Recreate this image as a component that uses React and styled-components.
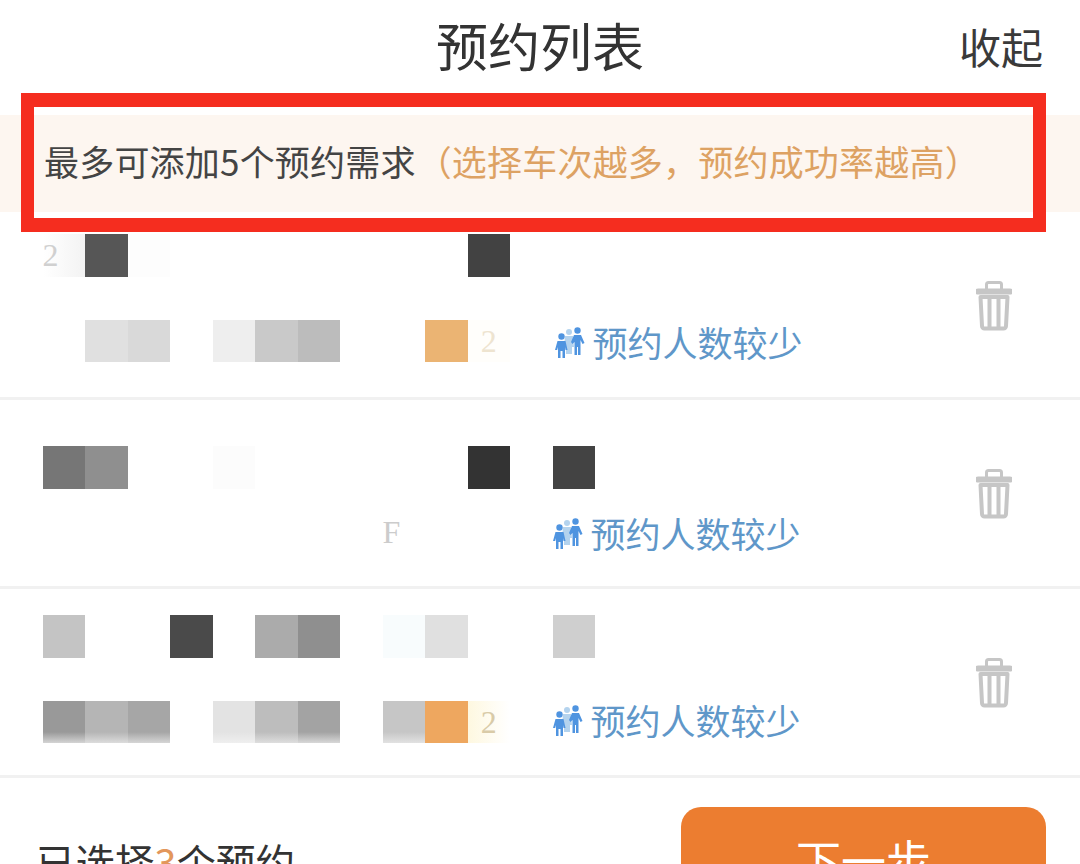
import React from "react";
import styled, { createGlobalStyle } from "styled-components";

const CELL = 42.5;

const GlobalStyle = createGlobalStyle`
  html, body {
    margin: 0;
    padding: 0;
    background: #ffffff;
  }
`;

const Page = styled.div`
  position: relative;
  width: 1080px;
  height: 864px;
  overflow: hidden;
  background: #fff;
  font-family: "Noto Sans CJK SC", "Liberation Sans", sans-serif;
  color: #333;
`;

const Header = styled.header`
  height: 115px;
  box-sizing: border-box;
  display: grid;
  grid-template-columns: 1fr auto 1fr;
  align-items: start;
  padding: 0 37px;
`;

const Title = styled.h1`
  grid-column: 2;
  margin: 0;
  padding-top: 7px;
  font-size: 52px;
  line-height: 76px;
  font-weight: 400;
  color: #333;
`;

const Collapse = styled.button`
  grid-column: 3;
  justify-self: end;
  margin-top: 15px;
  padding: 0;
  border: 0;
  background: none;
  font: inherit;
  font-size: 42px;
  line-height: 62px;
  color: #3a3a3a;
`;

const Banner = styled.div`
  height: 97px;
  box-sizing: border-box;
  padding: 0 0 6px 44px;
  display: flex;
  align-items: center;
  background: #fdf6f0;
  font-size: 35px;
  letter-spacing: 0.2px;
  white-space: nowrap;
  color: #444;
`;

const Hint = styled.span`
  margin-left: 1px;
  color: #dda263;
`;

const Highlight = styled.div`
  position: absolute;
  left: 21px;
  top: 93px;
  width: 1025px;
  height: 139px;
  box-sizing: border-box;
  border: solid #f52d1f;
  border-width: 14px 13px;
`;

const Row = styled.section`
  height: ${(p) => p.$height}px;
  box-sizing: border-box;
  padding: 0 68px 0 42.5px;
  display: flex;
  justify-content: space-between;
  align-items: center;
  border-bottom: 3px solid #f1f1f1;
`;

const Lines = styled.div`
  align-self: flex-start;
  display: flex;
  flex-direction: column;
  gap: ${(p) => p.$gap}px;
  padding-top: ${(p) => p.$top}px;
`;

const Line = styled.div`
  display: grid;
  grid-template-columns: repeat(13, ${CELL}px);
  grid-auto-rows: 42.5px;
  width: ${CELL * 13}px;
`;

const Cell = styled.div`
  grid-column: ${(p) => p.$col + 1};
  grid-row: 1;
  background: ${(p) => p.$shade};
  color: ${(p) => p.$ink || "transparent"};
  font-family: "Liberation Serif", serif;
  font-size: 32px;
  line-height: 42px;
  text-align: ${(p) => p.$align || "center"};
`;

const Demand = styled.div`
  grid-column: 13;
  grid-row: 1;
  display: flex;
  align-items: center;
  gap: 8px;
  width: 260px;
  height: 42.5px;
  transform: translate(${(p) => p.$x}px, ${(p) => p.$y}px);
  font-size: 35px;
  white-space: nowrap;
  color: #5f97c9;
`;

const TrashButton = styled.button`
  width: 36px;
  height: 50px;
  margin-top: 2px;
  padding: 0;
  border: 0;
  background: none;
`;

const Footer = styled.footer`
  display: flex;
  justify-content: space-between;
  align-items: center;
  padding: 29px 34px 0 36px;
`;

const Summary = styled.div`
  padding-bottom: 2px;
  font-size: 39.5px;
  line-height: 58px;
  color: #333;
`;

const Count = styled.span`
  color: #e3975b;
`;

const NextButton = styled.button`
  width: 365px;
  height: 110px;
  padding: 0 0 6px;
  border: 0;
  border-radius: 20px;
  background: #ec7d30;
  font: inherit;
  font-size: 45px;
  color: #fff;
`;

function PeopleIcon() {
  return (
    <svg width="30" height="32" viewBox="0 0 30 32" aria-hidden="true">
      <g fill="#b4d3ee">
        <circle cx="14" cy="6" r="3" />
        <path d="M10 10h8l1 11h-2v7h-6v-7h-2z" />
      </g>
      <g fill="#4f94e0">
        <circle cx="6.5" cy="10.5" r="3.2" />
        <path d="M2.5 15h8l2 9h-2l-.5-3v11H7.500v-7h-2v7H3V21l-.8 3H0z" />
        <circle cx="22.5" cy="4.500" r="3.2" />
        <path d="M19 9h7l3.500 8-2 1-2-4v15h-2.500v-8H22v8h-2.500V16l-2 2-1.500-2z" />
      </g>
    </svg>
  );
}

function TrashIcon() {
  return (
    <svg width="36" height="50" viewBox="0 0 36 50" aria-hidden="true">
      <g fill="none" stroke="#c6c6c6" strokeLinejoin="round">
        <path d="M10.500 9V3.500a2 2 0 0 1 2-2h11a2 2 0 0 1 2 2V9" strokeWidth="3" />
        <path d="M2 10.500h32" strokeWidth="6" strokeLinecap="round" />
        <path d="M4.500 16l1.500 29a2.500 2.500 0 0 0 2.500 2.500h19a2.500 2.500 0 0 0 2.500-2.500l1.500-29z" strokeWidth="4" />
        <path d="M13.500 16v31M22.500 16v31" strokeWidth="4" />
      </g>
    </svg>
  );
}

const fade = (color, to) => `linear-gradient(${color} 74%, ${to})`;

const reservations = [
  {
    id: 1,
    height: 188,
    top: 22,
    gap: 43,
    demand: { x: 2, y: 1 },
    first: [
      { col: 0, shade: "linear-gradient(90deg, #fff, #f3f3f3)", ink: "#d0d0d0", text: "2", align: "left" },
      { col: 1, shade: "#565656" },
      { col: 2, shade: "#fdfdfd" },
      { col: 10, shade: "#424242" },
    ],
    second: [
      { col: 1, shade: "#e0e0e0" },
      { col: 2, shade: "#d9d9d9" },
      { col: 4, shade: "#eeeeee" },
      { col: 5, shade: "#c9c9c9" },
      { col: 6, shade: "#bcbcbc" },
      { col: 9, shade: "#ebb473" },
      { col: 10, shade: "#fffefb", ink: "#eee4d0", text: "2" },
    ],
  },
  {
    id: 2,
    height: 189,
    top: 46,
    gap: 22,
    demand: { x: 0, y: 1 },
    first: [
      { col: 0, shade: "#767676" },
      { col: 1, shade: "#8f8f8f" },
      { col: 4, shade: "#fcfcfc" },
      { col: 10, shade: "#333333" },
      { col: 12, shade: "#434343" },
    ],
    second: [{ col: 8, shade: "#ffffff", ink: "#cccccc", text: "F", align: "left" }],
  },
  {
    id: 3,
    height: 189,
    top: 26,
    gap: 43,
    demand: { x: 0, y: -2 },
    first: [
      { col: 0, shade: "#c4c4c4" },
      { col: 3, shade: "#4a4a4a" },
      { col: 5, shade: "#ababab" },
      { col: 6, shade: "#8f8f8f" },
      { col: 8, shade: "#f8fcfd" },
      { col: 9, shade: "#e0e0e0" },
      { col: 12, shade: "#cfcfcf" },
    ],
    second: [
      { col: 0, shade: fade("#999999", "#d4d4d4") },
      { col: 1, shade: fade("#b5b5b5", "#dcdcdc") },
      { col: 2, shade: fade("#a6a6a6", "#d6d6d6") },
      { col: 4, shade: fade("#e3e3e3", "#efefef") },
      { col: 5, shade: fade("#bdbdbd", "#dedede") },
      { col: 6, shade: fade("#a3a3a3", "#d8d8d8") },
      { col: 8, shade: fade("#c6c6c6", "#e2e2e2") },
      { col: 9, shade: "#eea75f" },
      { col: 10, shade: "linear-gradient(90deg, #fef8e0, #fffdf6 70%, #fff)", ink: "#d9cba8", text: "2" },
    ],
  },
];

function Cells({ items }) {
  return items.map((item) => (
    <Cell key={item.col} $col={item.col} $shade={item.shade} $ink={item.ink} $align={item.align}>
      {item.text}
    </Cell>
  ));
}

export default function App() {
  return (
    <Page>
      <GlobalStyle />
      <Header>
        <Title>预约列表</Title>
        <Collapse>收起</Collapse>
      </Header>
      <Banner>
        最多可添加5个预约需求
        <Hint>（选择车次越多，预约成功率越高）</Hint>
      </Banner>
      <Highlight />
      {reservations.map((r) => (
        <Row key={r.id} $height={r.height}>
          <Lines $top={r.top} $gap={r.gap}>
            <Line>
              <Cells items={r.first} />
            </Line>
            <Line>
              <Cells items={r.second} />
              <Demand $x={r.demand.x} $y={r.demand.y}>
                <PeopleIcon />
                预约人数较少
              </Demand>
            </Line>
          </Lines>
          <TrashButton aria-label="删除">
            <TrashIcon />
          </TrashButton>
        </Row>
      ))}
      <Footer>
        <Summary>
          已选择<Count>3</Count>个预约
        </Summary>
        <NextButton>下一步</NextButton>
      </Footer>
    </Page>
  );
}
